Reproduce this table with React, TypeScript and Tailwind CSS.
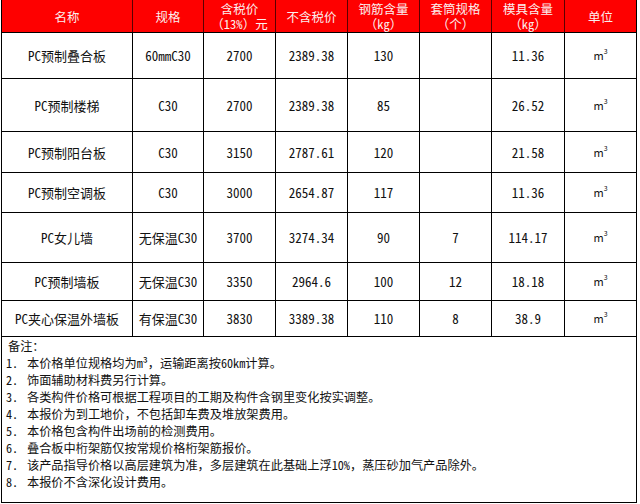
import React from "react";

const cols = "grid-cols-[131px_71px_72px_72px_72px_72px_73px_71px]";

function T({ s }: { s: string }) {
  const parts = s.match(/[\x20-\x7e]+|[^\x20-\x7e]+/g) || [];
  return (
    <>
      {parts.map((p, i) =>
        /^[\x20-\x7e]+$/.test(p) ? (
          <span key={i} className="[font-feature-settings:'hwid']">
            {p}
          </span>
        ) : (
          <span key={i}>{p}</span>
        )
      )}
    </>
  );
}

const headers: [string, string?][] = [
  ["名称"],
  ["规格"],
  ["含税价", "（13%）元"],
  ["不含税价"],
  ["钢筋含量", "（kg）"],
  ["套筒规格", "（个）"],
  ["模具含量", "（kg）"],
  ["单位"],
];

const rows: { h: string; c: string[] }[] = [
  { h: "h-[46px]", c: ["PC预制叠合板", "60mmC30", "2700", "2389.38", "130", "", "11.36", "m3"] },
  { h: "h-[53px]", c: ["PC预制楼梯", "C30", "2700", "2389.38", "85", "", "26.52", "m3"] },
  { h: "h-[41px]", c: ["PC预制阳台板", "C30", "3150", "2787.61", "120", "", "21.58", "m3"] },
  { h: "h-[40px]", c: ["PC预制空调板", "C30", "3000", "2654.87", "117", "", "11.36", "m3"] },
  { h: "h-[50px]", c: ["PC女儿墙", "无保温C30", "3700", "3274.34", "90", "7", "114.17", "m3"] },
  { h: "h-[38px]", c: ["PC预制墙板", "无保温C30", "3350", "2964.6", "100", "12", "18.18", "m3"] },
  { h: "h-[36px]", c: ["PC夹心保温外墙板", "有保温C30", "3830", "3389.38", "110", "8", "38.9", "m3"] },
];

const notes = [
  "本价格单位规格均为m³，运输距离按60km计算。",
  "饰面辅助材料费另行计算。",
  "各类构件价格可根据工程项目的工期及构件含钢里变化按实调整。",
  "本报价为到工地价，不包括卸车费及堆放架费用。",
  "本价格包含构件出场前的检测费用。",
  "叠合板中桁架筋仅按常规价格桁架筋报价。",
  "该产品指导价格以高层建筑为准，多层建筑在此基础上浮10%，蒸压砂加气产品除外。",
  "本报价不含深化设计费用。",
];

export default function App() {
  return (
    <div className="w-[640px] h-[504px] bg-white overflow-hidden pl-[1px] text-[#111] [font-family:'Noto_Sans_CJK_SC',sans-serif]">
      <div className="w-[636px] border-l border-r border-b border-black">
        <div className={`grid ${cols} h-[33px] bg-[#fe0000] border-b border-black`}>
          {headers.map(([a, b], i) => (
            <div
              key={i}
              className={`flex flex-col items-center justify-center text-[12.5px] leading-[15px] text-[#fbeeee] ${i < 7 ? "border-r border-[#5a0000]" : ""}`}
            >
              <span>{a}</span>
              {b && (
                <span>
                  <T s={b} />
                </span>
              )}
            </div>
          ))}
        </div>
        {rows.map((r, ri) => (
          <div key={ri} className={`grid ${cols} ${r.h} border-b border-black`}>
            {r.c.map((t, i) => (
              <div
                key={i}
                className={`flex items-center justify-center text-[13px] leading-none ${i < 7 ? "border-r border-black" : ""}`}
              >
                {i === 7 ? (
                  <span className="flex items-start">
                    <span className="text-[11px] leading-none">m</span>
                    <span className="text-[7px] leading-none -mt-[2px]">3</span>
                  </span>
                ) : (
                  <T s={t} />
                )}
              </div>
            ))}
          </div>
        ))}
        <div className="h-[165px] pl-[4px] pt-[1px] text-[12.2px] leading-[17px]">
          <div className="pl-[2px]">备注：</div>
          {notes.map((n, i) => (
            <div key={i} className="flex">
              <span className="w-[21px] shrink-0 [font-feature-settings:'hwid']">{i + 1}.</span>
              <span>
                <T s={n} />
              </span>
            </div>
          ))}
        </div>
      </div>
    </div>
  );
}
